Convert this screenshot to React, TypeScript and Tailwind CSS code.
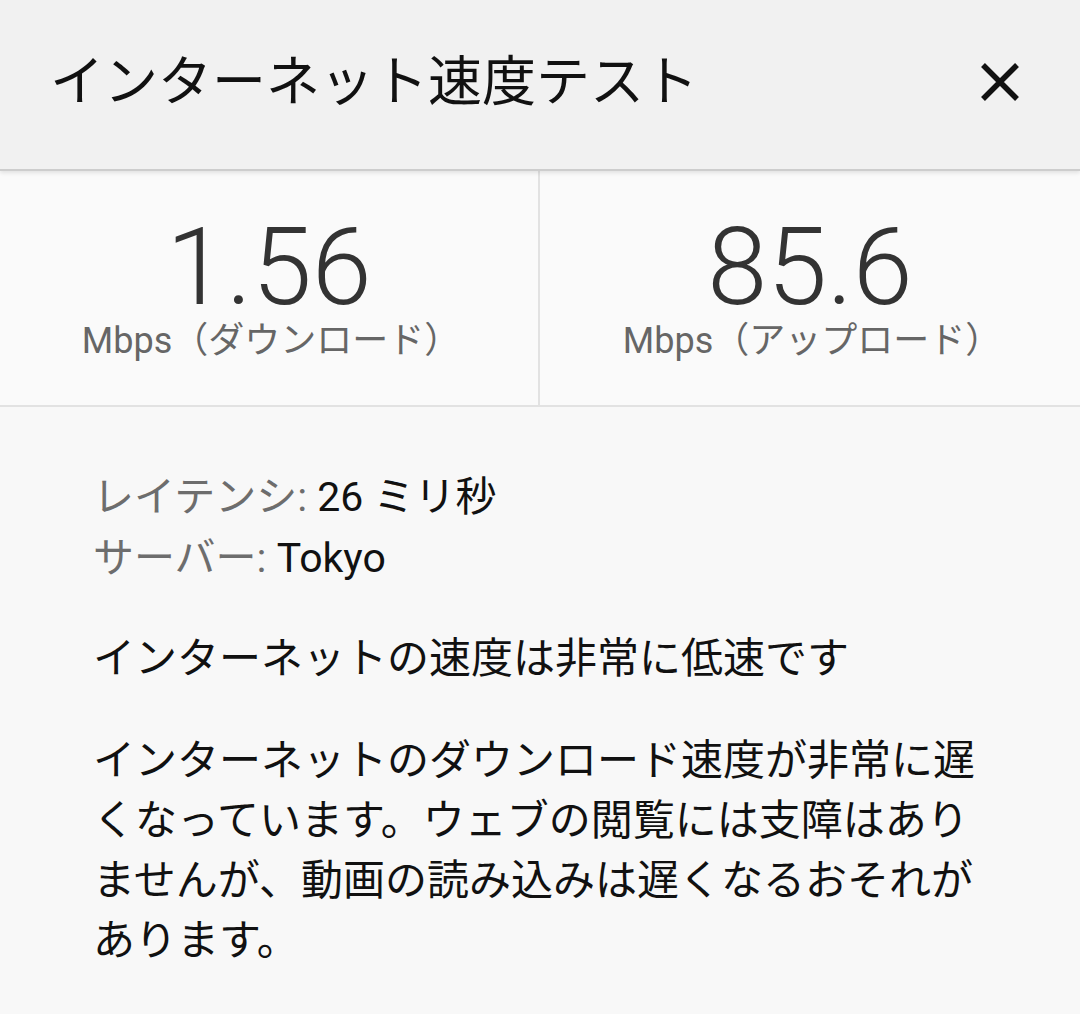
import React from "react";

const FONT = { fontFamily: 'Roboto, "Noto Sans CJK JP", sans-serif' };

export default function App() {
  return (
    <div className="w-[1080px] h-[1014px] bg-[#f8f8f8] overflow-hidden" style={FONT}>
      <header className="relative z-10 h-[171px] bg-[#f1f1f1] border-b-2 border-[#cdcdcd] shadow-[0_2px_4px_rgba(0,0,0,0.10)] flex items-center justify-between pl-[50px] pr-[60px]">
        <h1 className="text-[54px] leading-[60px] font-normal text-[#111] pb-[4px]">インターネット速度テスト</h1>
        <svg width="40" height="40" viewBox="0 0 40 40" className="mb-[6px]">
          <path d="M3 3 L37 37 M37 3 L3 37" stroke="#111" strokeWidth="5.5" strokeLinecap="butt" />
        </svg>
      </header>

      <section className="grid grid-cols-2 h-[236px] bg-[#fafafa] border-b-2 border-[#e2e2e2]">
        <div className="flex flex-col items-center justify-center gap-[6px] border-r-2 border-[#e2e2e2]">
          <div className="text-[108px] leading-[100px] font-light text-[#333]">1.56</div>
          <div className="text-[36px] leading-[36px] text-[#666] pl-[4px]">Mbps（ダウンロード）</div>
        </div>
        <div className="flex flex-col items-center justify-center gap-[6px]">
          <div className="text-[108px] leading-[100px] font-light text-[#333]">85.6</div>
          <div className="text-[36px] leading-[36px] text-[#666] pl-[4px]">Mbps（アップロード）</div>
        </div>
      </section>

      <main className="pt-[60px] pl-[93px] pr-[96px]">
        <div className="text-[41px] leading-[61px]">
          <div>
            <span className="text-[#6d6d6d]">レイテンシ: </span>
            <span className="text-[#111]">26 ミリ秒</span>
          </div>
          <div>
            <span className="text-[#6d6d6d]">サーバー: </span>
            <span className="text-[#111]">Tokyo</span>
          </div>
        </div>
        <p className="mt-[40px] text-[42px] leading-[60px] text-[#111]">インターネットの速度は非常に低速です</p>
        <p className="mt-[42px] text-[42px] leading-[60px] text-[#111]">
          インターネットのダウンロード速度が非常に遅くなっています。ウェブの閲覧には支障はありませんが、動画の読み込みは遅くなるおそれがあります。
        </p>
      </main>
    </div>
  );
}
